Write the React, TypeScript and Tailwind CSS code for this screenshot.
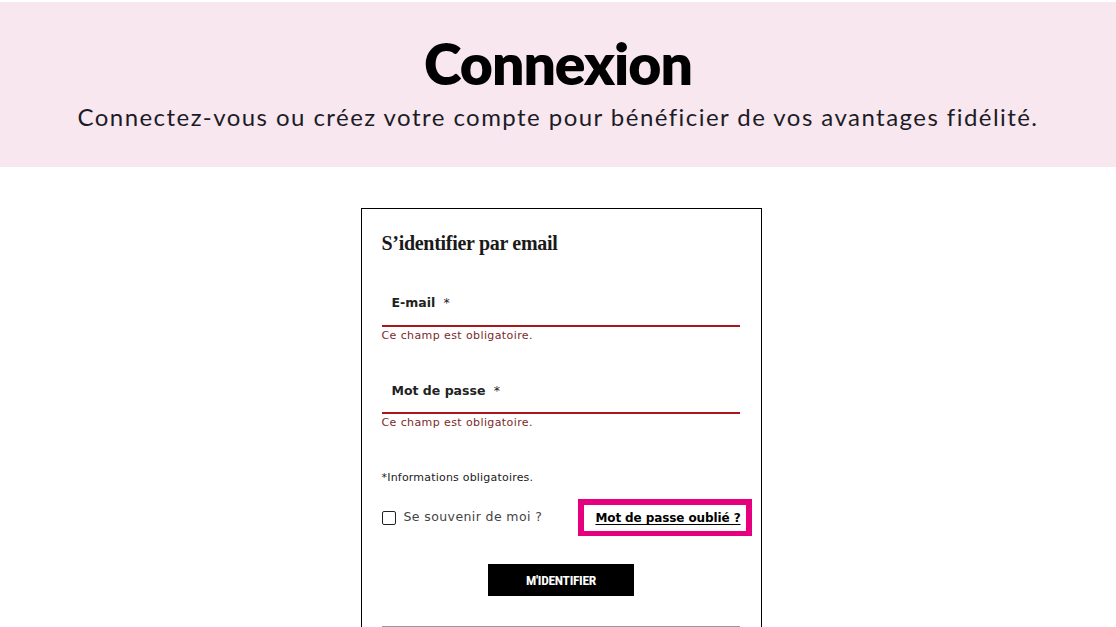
export default function App() {
  const gothic = { fontFamily: '"DejaVu Sans", "Noto Sans", sans-serif' };
  return (
    <div className="w-[1116px] h-[627px] overflow-hidden bg-white" style={gothic}>
      <div className="mt-[2px] h-[165px] bg-[#f8e7ee] flex flex-col items-center">
        <h1
          className="mt-[29px] text-[57px] leading-[64px] font-bold text-black tracking-[-1px]"
          style={{ fontFamily: 'Lato, "Noto Sans", sans-serif', fontWeight: 800 }}
        >
          Connexion
        </h1>
        <p
          className="mt-[8px] text-[24px] leading-[28px] text-[#1c1c28] tracking-[1.45px]"
          style={{ fontFamily: 'Lato, "Noto Sans", sans-serif' }}
        >
          Connectez-vous ou créez votre compte pour bénéficier de vos avantages fidélité.
        </p>
      </div>
      <div className="flex justify-center pt-[41px] pl-[6px]">
        <div className="w-[401px] h-[430px] border border-black px-[20px] pt-[22px]">
          <h2
            className="text-[20px] leading-[24px] font-bold text-[#1a1a1a] tracking-[-0.3px]"
            style={{ fontFamily: '"Liberation Serif", "DejaVu Serif", serif' }}
          >
            S’identifier par email
          </h2>
          <div className="mt-[40px]">
            <div className="pl-[10px] text-[12.5px] leading-[16px] font-bold text-[#222]">
              E-mail <span className="ml-[4px] font-normal">*</span>
            </div>
            <div className="mt-[14px] h-[2px] w-[358px] bg-[#a8171b]" />
            <div className="mt-[2px] text-[11px] leading-[14px] text-[#7c2a2a] tracking-[0.4px]">Ce champ est obligatoire.</div>
          </div>
          <div className="mt-[40px]">
            <div className="pl-[10px] text-[12.5px] leading-[16px] font-bold text-[#222]">
              Mot de passe <span className="ml-[4px] font-normal">*</span>
            </div>
            <div className="mt-[13px] h-[2px] w-[358px] bg-[#a8171b]" />
            <div className="mt-[2px] text-[11px] leading-[14px] text-[#7c2a2a] tracking-[0.4px]">Ce champ est obligatoire.</div>
          </div>
          <div className="mt-[41px] text-[11px] leading-[14px] text-[#222] tracking-[0.2px]">*Informations obligatoires.</div>
          <div className="mt-[14px] flex items-center justify-between w-[370px]">
            <label className="flex items-center gap-[8px] text-[12.5px] text-[#444] tracking-[0.4px]">
              <span className="w-[14px] h-[14px] border border-[#222] rounded-[2px] inline-block" />
              Se souvenir de moi ?
            </label>
            <div className="bg-[#e6007e] h-[37px] w-[174px] pt-[6px] px-[6px] pb-[5px] flex">
              <div className="flex-1 bg-white flex items-center justify-end pr-[5px]">
                <a className="text-[12px] font-bold text-black underline underline-offset-[2px] tracking-[-0.1px]">Mot de passe oublié ?</a>
              </div>
            </div>
          </div>
          <div className="mt-[28px] flex justify-center">
            <button
              className="w-[146px] h-[32px] bg-black text-white text-[13.5px] font-bold tracking-[-0.3px]"
              style={{ fontFamily: '"Liberation Sans Narrow", "Roboto Condensed", Roboto, sans-serif' }}
            >
              M'IDENTIFIER
            </button>
          </div>
          <div className="mt-[30px] h-px w-[358px] bg-[#999]" />
        </div>
      </div>
    </div>
  );
}
